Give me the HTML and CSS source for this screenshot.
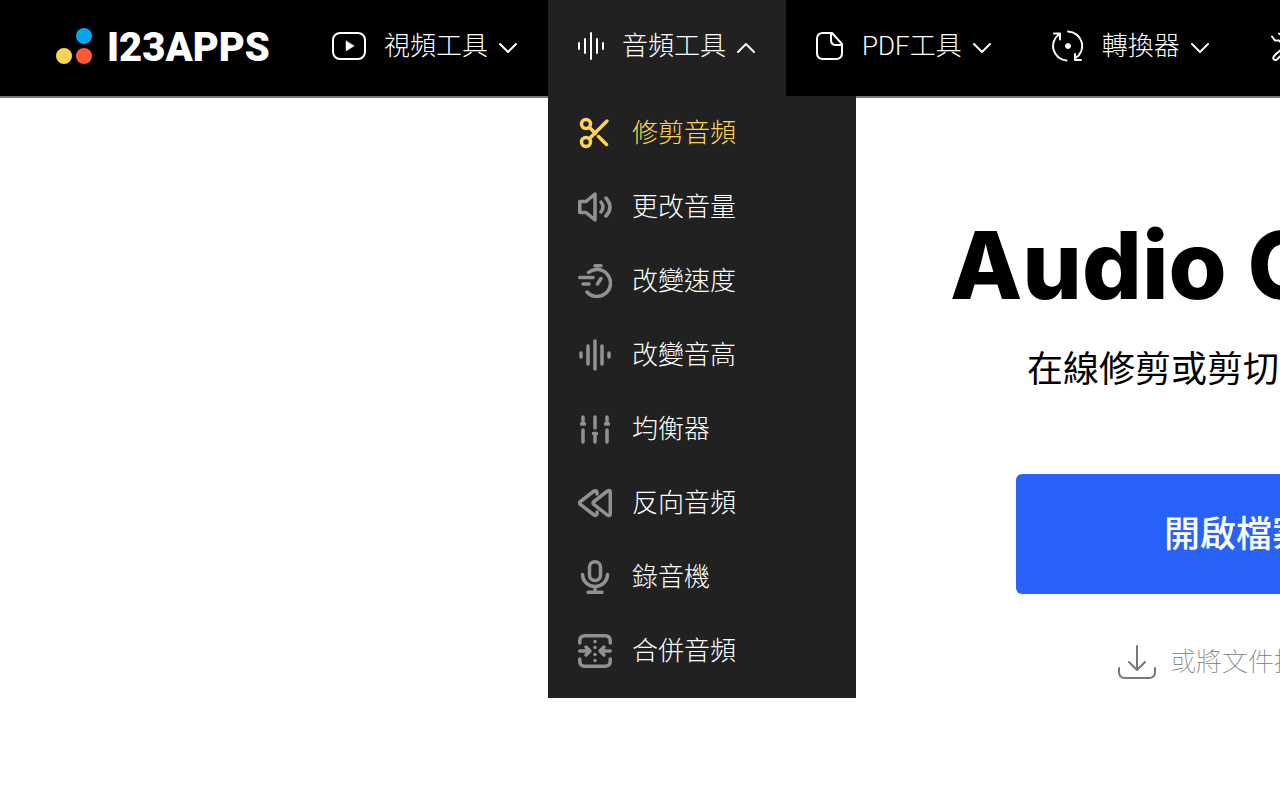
FILE: index.html
```html
<!DOCTYPE html>
<html lang="zh-Hant">
<head>
<meta charset="utf-8">
<meta name="viewport" content="width=device-width, initial-scale=1">
<title>Audio Cutter</title>
<link rel="stylesheet" href="styles.css">
</head>
<body>
<header class="header">
  <a class="logo" href="#">
    <svg class="logo-mark" width="37" height="37" viewBox="0 0 37 37" aria-hidden="true"><circle cx="28" cy="8" r="8" fill="#05a6f0"/><circle cx="8" cy="28" r="8" fill="#ffd452"/><circle cx="28" cy="28" r="8" fill="#ff5938"/></svg>
    <span class="logo-name">I23APPS</span>
  </a>
  <nav class="nav">
    <div class="nav-item">
      <button class="nav-button" type="button">
        <svg width="34" height="28" viewBox="0 0 34 28" class="line" aria-hidden="true"><rect x="1" y="1" width="32" height="26" rx="7"/><path d="M14 9v10l8-5z" fill="currentColor" stroke-width="0.500"/></svg>
        <span class="nav-label">視頻工具</span>
        <svg width="18" height="10" viewBox="0 0 18 10" class="line chevron" aria-hidden="true"><path d="M1 1l8 8 8-8"/></svg>
      </button>
    </div>
    <div class="nav-item nav-item-open">
      <button class="nav-button" type="button" aria-expanded="true">
        <svg width="26" height="28" viewBox="0 0 26 28" class="line" aria-hidden="true"><path d="M1 11v6M7 7v14M13 1v26M19 7v14M25 11v6"/></svg>
        <span class="nav-label">音頻工具</span>
        <svg width="18" height="10" viewBox="0 0 18 10" class="line chevron" aria-hidden="true"><path d="M1 9l8-8 8 8"/></svg>
      </button>
      <ul class="menu">
        <li><a class="menu-link menu-link-active" href="#"><svg class="menu-icon" viewBox="0 0 34 34" aria-hidden="true"><circle cx="8" cy="8" r="4.500"/><circle cx="8" cy="26" r="4.500"/><path d="M11.500 11.500l6 6M20.500 20.500l8 8M11.500 22.500L29 5"/></svg>修剪音頻</a></li>
        <li><a class="menu-link" href="#"><svg class="menu-icon" viewBox="0 0 34 34" aria-hidden="true"><path d="M1.750 11.500v11H8l9 7.500V4L8 11.500zM23 12q4 5 0 10M28 8q8 9 0 18"/></svg>更改音量</a></li>
        <li><a class="menu-link" href="#"><svg class="menu-icon" viewBox="0 0 34 34" aria-hidden="true"><path d="M17 1.750h6M10.500 8.500A13.500 13.500 0 1 1 9 28M1.750 13.500H15M5 20H11M23 14.500L19.500 20"/></svg>改變速度</a></li>
        <li><a class="menu-link" href="#"><svg class="menu-icon" viewBox="0 0 34 34" aria-hidden="true"><path d="M3 15v4M10 8v18M17 3v28M24 8v18M31 15v4"/></svg>改變音高</a></li>
        <li><a class="menu-link" href="#"><svg class="menu-icon" viewBox="0 0 34 34" aria-hidden="true"><path d="M5 5v7M3.500 12h3M5 18v12M17 5v11M15.500 21.500h3M17 22v8M29 5v7M27.500 12h3M29 18v12"/></svg>均衡器</a></li>
        <li><a class="menu-link" href="#"><svg class="menu-icon" viewBox="0 0 34 34" aria-hidden="true"><path d="M32.250 6.500v21q0 3-3 1.500L16 18.500q-2-1.500 0-3L29.500 5q3-1.500 2.750 1.500zM19 8V6q-1-2-3-1L2.500 15.500q-2 1.500 0 3L16 29q2 1 3-1v-2"/></svg>反向音頻</a></li>
        <li><a class="menu-link" href="#"><svg class="menu-icon" viewBox="0 0 34 34" aria-hidden="true"><rect x="11.500" y="1.750" width="11" height="18.750" rx="5.500"/><path d="M4.500 14.500a12.500 12 0 0 0 25 0M17 26.500v6M10 32.250h14"/></svg>錄音機</a></li>
        <li><a class="menu-link" href="#"><svg class="menu-icon" viewBox="0 0 34 34" aria-hidden="true"><path d="M1.750 9V7q0-5.250 5.250-5.250h20q5.250 0 5.250 5.250v2M1.750 25v2q0 5.250 5.250 5.250h20q5.250 0 5.250-5.250v-2M1.750 17H11M8 13l4 4-4 4M32.250 17H23M26 13l-4 4 4 4M17 7.500v0M17 13.500v0M17 20.500v0M17 26.500v0"/></svg>合併音頻</a></li>
      </ul>
    </div>
    <div class="nav-item">
      <button class="nav-button" type="button">
        <svg width="28" height="28" viewBox="0 0 28 28" class="line" aria-hidden="true"><path d="M7 1h9l10 11v9q0 6-6 6H7q-6 0-6-6V7q0-6 6-6zM15 1v7q0 5 5 5h6"/></svg>
        <span class="nav-label">PDF工具</span>
        <svg width="18" height="10" viewBox="0 0 18 10" class="line chevron" aria-hidden="true"><path d="M1 1l8 8 8-8"/></svg>
      </button>
    </div>
    <div class="nav-item">
      <button class="nav-button" type="button">
        <svg width="32" height="32" viewBox="0 0 32 32" class="line" aria-hidden="true"><path d="M16 1.500A14.500 14.500 0 0 1 23 28.500M14.500 30.500A14.500 14.500 0 0 1 7.500 4M2 3.500h6v6M29 30h-6v-6"/><circle cx="16" cy="16" r="2.500" fill="currentColor" stroke-width="1"/></svg>
        <span class="nav-label">轉換器</span>
        <svg width="18" height="10" viewBox="0 0 18 10" class="line chevron" aria-hidden="true"><path d="M1 1l8 8 8-8"/></svg>
      </button>
    </div>
    <div class="nav-item">
      <button class="nav-button" type="button" aria-label="實用工具">
        <svg width="32" height="30" viewBox="0 0 32 30" class="line" aria-hidden="true"><path d="M2 5.500l3 4h4l4 4M9 2.500q5 3 3.500 8L27 25M14 16L5 24q-3 3-1 4.500t4-1L18 17"/></svg>
      </button>
    </div>
  </nav>
</header>
<main class="main">
  <section class="hero">
    <h1 class="title">Audio Cutter</h1>
    <p class="subtitle">在線修剪或剪切音頻文件</p>
    <button class="open-button" type="button">開啟檔案</button>
    <p class="hint"><svg width="38" height="34" viewBox="0 0 38 34" class="line" aria-hidden="true"><path d="M19 1v24M11 17l8 8 8-8M1 23v4q0 6 6 6h24q6 0 6-6v-4"/></svg>或將文件拖到此</p>
  </section>
</main>
</body>
</html>
```
FILE: styles.css
```css
* { box-sizing: border-box; }
body {
  margin: 0;
  min-height: 100vh;
  overflow-x: hidden;
  background: #fff;
  color: #000;
  font-family: Roboto, "Noto Sans CJK TC", sans-serif;
}
.header {
  display: flex;
  height: 98px;
  background: #000;
  border-bottom: 2px solid #777;
}
.logo {
  display: flex;
  flex: none;
  align-items: center;
  gap: 14px;
  width: 302px;
  padding: 0 0 4px 56px;
  color: #fff;
  text-decoration: none;
}
.logo-mark { flex: none; }
.logo-name {
  padding-top: 4px;
  font-family: Roboto, sans-serif;
  font-size: 40px;
  line-height: 48px;
  font-weight: 900;
}
.nav { display: flex; }
.nav-item { position: relative; flex: none; }
.nav-item-open { background: #212121; }
.nav-button {
  display: flex;
  align-items: center;
  height: 96px;
  padding: 0 31px 4px 30px;
  border: 0;
  background: none;
  color: #fff;
  font: inherit;
  font-size: 26px;
  font-weight: 300;
  line-height: 40px;
  white-space: nowrap;
}
.nav-label { margin: 0 11px 0 18px; }
.line {
  flex: none;
  fill: none;
  stroke: currentColor;
  stroke-width: 2;
  stroke-linecap: round;
  stroke-linejoin: round;
}
.chevron { margin-top: 4px; }
.menu {
  position: absolute;
  top: 96px;
  left: 0;
  z-index: 1;
  width: 308px;
  margin: 0;
  padding: 0 0 10px;
  background: #212121;
  list-style: none;
}
.menu-link {
  display: flex;
  align-items: center;
  gap: 20px;
  height: 74px;
  padding: 0 30px;
  color: #fff;
  font-size: 26px;
  font-weight: 300;
  line-height: 40px;
  text-decoration: none;
}
.menu-icon {
  flex: none;
  width: 34px;
  height: 34px;
  fill: none;
  stroke: #919191;
  stroke-width: 3.5;
  stroke-linecap: round;
  stroke-linejoin: round;
}
.menu-link-active { color: #ffd452; }
.menu-link-active .menu-icon { stroke: #ffd452; }
.main { overflow: hidden; }
.hero {
  display: flex;
  flex-direction: column;
  align-items: flex-start;
  margin-left: 950px;
  padding-top: 107px;
}
.title {
  margin: 0;
  font-family: Inter, sans-serif;
  font-size: 94px;
  font-weight: 800;
  line-height: 120px;
  white-space: nowrap;
}
.subtitle {
  margin: 19px 0 0 77px;
  font-size: 36px;
  line-height: 52px;
  white-space: nowrap;
}
.open-button {
  width: 448px;
  height: 120px;
  margin: 78px 0 0 66px;
  padding: 0 0 6px 148px;
  border: 0;
  border-radius: 6px;
  background: #2962f9;
  color: #fff;
  font: inherit;
  font-size: 36px;
  font-weight: 500;
  text-align: left;
}
.hint {
  display: flex;
  align-items: center;
  gap: 14px;
  margin: 48px 0 0 168px;
  color: #777;
  font-size: 26px;
  font-weight: 100;
  line-height: 40px;
  white-space: nowrap;
}
```
